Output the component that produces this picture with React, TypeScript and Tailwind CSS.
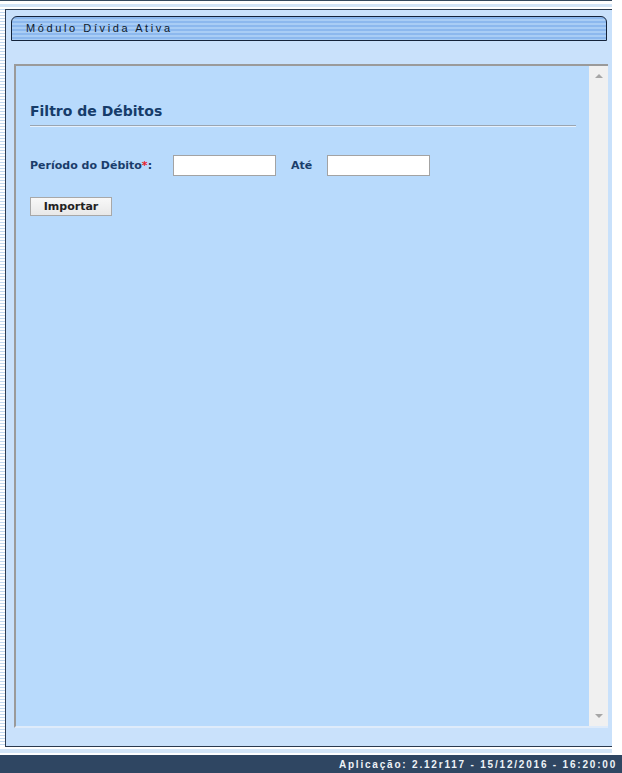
export default function App() {
  return (
    <div className="w-[622px] h-[773px] bg-white flex flex-col overflow-hidden">
      {/* top rule */}
      <div className="h-[1px] w-[612px] bg-[#34495e]" />
      <div className="h-[8px] w-[612px] flex flex-col">
        <div className="h-[3px]" />
        <div className="h-[3px] bg-[#d3e5f7]" />
      </div>

      <div className="flex w-[612px] h-[738px]">
        <div className="w-[5px] h-full bg-[repeating-linear-gradient(to_bottom,#c2d8ef_0px,#c2d8ef_1px,#ffffff_1px,#ffffff_3px)]" />
        <div className="flex-1 flex flex-col border-t border-l border-b border-[#2b3a4f] bg-[#c9e1fb] pl-[5px] pt-[6px]">
          {/* module tab */}
          <div className="w-[596px] h-[25px] flex items-center pl-[14px] border border-[#14233a] rounded-tl-[6px] rounded-tr-[6px] bg-[repeating-linear-gradient(to_bottom,#8cb8ee_0px,#8cb8ee_2px,#a9cdf5_2px,#a9cdf5_4px)]">
            <span className="font-['Liberation_Sans',Arial,sans-serif] text-[11px] tracking-[2.6px] text-[#0e1a2c]">
              Módulo Dívida Ativa
            </span>
          </div>

          {/* content panel */}
          <div className="mt-[23px] ml-[3px] w-[594px] h-[664px] flex border-t-2 border-l-2 border-[#9a9a9a] border-b-2 border-b-[#deebfa] bg-[#b8dafc]">
            <div className="flex-1 flex flex-col pl-[14px] pr-[13px] pt-[35px] font-['DejaVu_Sans',Verdana,sans-serif]">
              <h1 className="text-[14px] font-bold text-[#163c6a] leading-[20px]">Filtro de Débitos</h1>
              <div className="mt-[4px] h-[2px] border-t border-[#9aa5b1] border-b border-b-[#e6f1fd]" />

              <div className="mt-[28px] flex items-center text-[11px] font-bold text-[#1a3d6b]">
                <span className="pt-[1px]">
                  Período do Débito<span className="text-[#e8202a]">*</span>:
                </span>
                <input className="ml-[21px] w-[103px] h-[21px] bg-white border border-[#a3a3a3] outline-none" />
                <span className="ml-[15px] pt-[1px]">Até</span>
                <input className="ml-[15px] w-[103px] h-[21px] bg-white border border-[#a3a3a3] outline-none" />
              </div>

              <div className="mt-[17px]">
                <button className="w-[82px] h-[19px] border border-[#a8a8a8] bg-[linear-gradient(to_bottom,#f8f8f8,#e8e8e8)] text-[11px] font-bold text-[#222] leading-none">
                  Importar
                </button>
              </div>
            </div>

            {/* scrollbar */}
            <div className="w-[19px] h-full bg-[#f0f0f0] flex flex-col items-center justify-between py-[8px]">
              <div className="w-0 h-0 border-l-[4px] border-r-[4px] border-b-[4px] border-l-transparent border-r-transparent border-b-[#a6a6a6]" />
              <div className="w-0 h-0 border-l-[4px] border-r-[4px] border-t-[4px] border-l-transparent border-r-transparent border-t-[#a6a6a6]" />
            </div>
          </div>
        </div>
      </div>

      <div className="h-[8px] w-[612px] flex flex-col">
        <div className="h-[2px]" />
        <div className="h-[4px] bg-[#d3e5f7]" />
      </div>

      {/* footer */}
      <div className="h-[18px] bg-[#2f4662] flex items-center justify-end pr-[5px]">
        <span className="font-['Liberation_Sans',Arial,sans-serif] text-[10px] font-bold tracking-[1.8px] text-[#eef3f8]">
          Aplicação: 2.12r117 - 15/12/2016 - 16:20:00
        </span>
      </div>
    </div>
  );
}
